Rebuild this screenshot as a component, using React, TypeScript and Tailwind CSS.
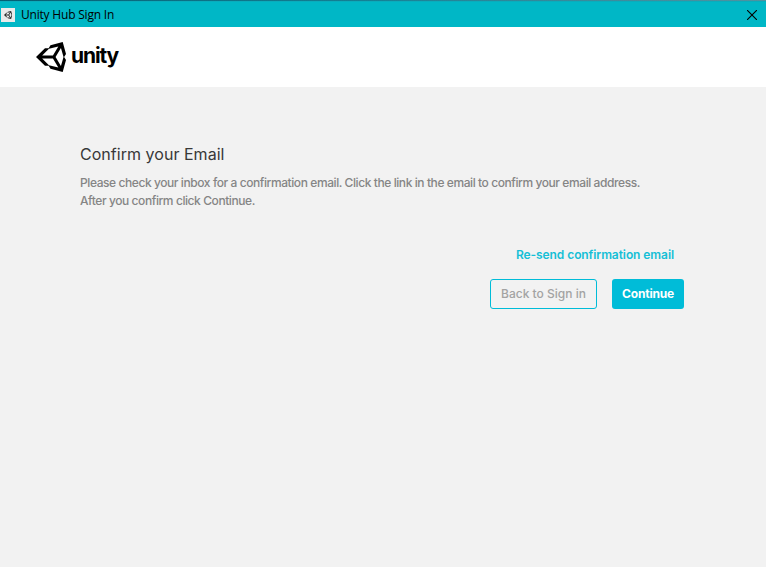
function UnityMark({ className }: { className: string }) {
  return (
    <svg viewBox="15.5 14.7 482.6 482.6" className={className} fill="currentColor" aria-hidden="true">
      <path d="M498.11 206.4L445.31 14.72 248.2 66.08 219 116.14l-59.2-.43L15.54 256l144.28 140.32 59.17-.43 29.24 50 197.08 51.36 52.8-191.62-30-49.63zM223.77 124.2L374.55 86.51 288 232.33H114.87zm0 263.63L114.87 279.71H288l86.55 145.81zm193 14L330.17 256l86.58-145.84L458.56 256z" />
    </svg>
  );
}

function TitleBar() {
  return (
    <div className="flex flex-col bg-[#00b7c6] text-black">
      <div className="h-px bg-linear-to-r from-[#045f73] via-[#158296] to-[#4f93a0]" />
      <div className="flex h-[26px] items-center justify-between border-t border-[#0aacbc] pl-px pr-[9px]">
        <div className="flex items-center">
          <span className="flex size-[14px] items-center justify-center bg-[#e9eaea]">
            <UnityMark className="size-2 text-[#222]" />
          </span>
          <span className="ml-[6px] font-['Open_Sans',sans-serif] text-[12px] leading-4 tracking-[-0.2px]">Unity Hub Sign In</span>
        </div>
        <button aria-label="Close">
          <svg viewBox="0 0 10 10" className="size-[10px]" stroke="currentColor" strokeWidth="1.1">
            <path d="M0 0l10 10M10 0L0 10" />
          </svg>
        </button>
      </div>
    </div>
  );
}

export default function App() {
  return (
    <div className="flex h-[567px] w-[766px] flex-col bg-[#f2f2f2] font-['Inter',sans-serif]">
      <TitleBar />
      <header className="flex h-[60px] items-center bg-white pl-[36px] text-black">
        <UnityMark className="size-[30px]" />
        <span className="mb-[2px] ml-[5px] text-[21px] leading-6 font-bold tracking-[-1.1px]">unity</span>
      </header>
      <main className="flex flex-col pt-[56px] pr-[82px] pl-[80px]">
        <h1 className="text-[16px] leading-[22px] tracking-[0.03px] text-[#383838]">Confirm your Email</h1>
        <p className="mt-[9px] text-[12px] leading-[18px] font-medium tracking-[-0.42px] whitespace-nowrap text-[#858585]">
          Please check your inbox for a confirmation email. Click the link in the email to confirm your email address.
          <br />
          After you confirm click Continue.
        </p>
        <a className="mt-[35px] mr-[10px] self-end text-[12px] leading-[20px] font-semibold tracking-[-0.08px] text-[#15bfd6]">Re-send confirmation email</a>
        <div className="mt-[14px] flex justify-end gap-[15px] text-[12px]">
          <button className="h-[30px] w-[107px] rounded-[3px] border border-[#00bcd8] font-medium text-[#a3a3a3]">Back to Sign in</button>
          <button className="h-[30px] w-[72px] rounded-[3px] bg-[#00bcd8] font-bold tracking-[-0.2px] text-white">Continue</button>
        </div>
      </main>
    </div>
  );
}
